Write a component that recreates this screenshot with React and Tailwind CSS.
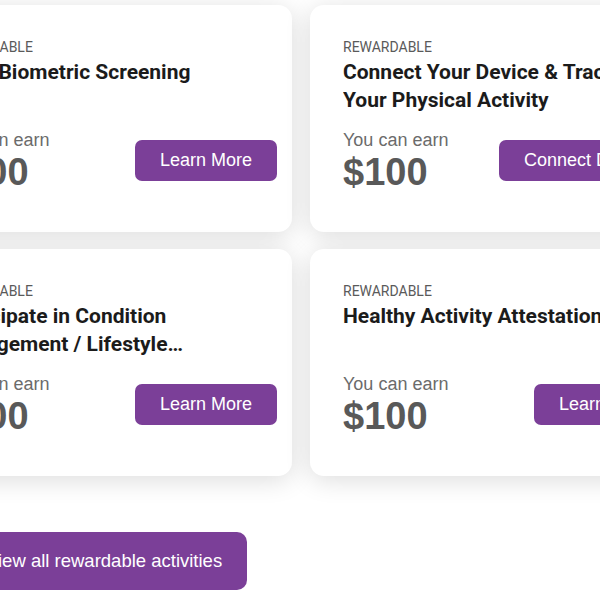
import React from "react";

const activities = [
  {
    title: "Get a Biometric Screening",
    amount: "$100",
    action: "Learn More",
  },
  {
    title: "Connect Your Device & Track Your Physical Activity",
    amount: "$100",
    action: "Connect Device",
  },
  {
    title: "Participate in Condition Management / Lifestyle Management Program",
    amount: "$100",
    action: "Learn More",
  },
  {
    title: "Healthy Activity Attestation",
    amount: "$100",
    action: "Learn More",
  },
];

function ActivityCard({ item }) {
  return (
    <div className="flex h-[227px] flex-col rounded-[14px] bg-white pl-[33px] pr-[15px] pt-[32px] pb-[40px] shadow-[0_4px_26px_rgba(0,0,0,0.14)]">
      <div className="font-['Roboto',sans-serif] text-[14px] leading-[20px] text-[#5a5a5a]">
        REWARDABLE
      </div>
      <h3 className="mt-[1px] line-clamp-2 max-w-[310px] font-['Roboto',sans-serif] text-[21px] font-bold leading-[28px] text-[#1b1b1b]">
        {item.title}
      </h3>

      {/* earn + action */}
      <div className="mt-auto flex items-center justify-between font-['Liberation_Sans',Arial,sans-serif]">
        <div>
          <div className="text-[18px] leading-[24px] text-[#6b6b6b]">You can earn</div>
          <div className="text-[38px] font-bold leading-[40px] text-[#595959]">
            {item.amount}
          </div>
        </div>
        <button className="h-[41px] whitespace-nowrap rounded-[7px] bg-[#7b3f98] px-[25px] text-[18px] text-white">
          {item.action}
        </button>
      </div>
    </div>
  );
}

export default function App() {
  return (
    <div className="h-[600px] w-[600px] overflow-hidden bg-white">
      <div className="ml-[-89px] pt-[5px]">
        <div className="grid grid-cols-[381px_381px] gap-x-[18px] gap-y-[17px]">
          {activities.map((item) => (
            <ActivityCard key={item.title} item={item} />
          ))}
        </div>

        <div className="ml-[50px] mt-[56px]">
          <button className="h-[58px] whitespace-nowrap rounded-[10px] bg-[#7b3f98] px-[25px] font-['Liberation_Sans',Arial,sans-serif] text-[18.5px] text-white">
            View all rewardable activities
          </button>
        </div>
      </div>
    </div>
  );
}
